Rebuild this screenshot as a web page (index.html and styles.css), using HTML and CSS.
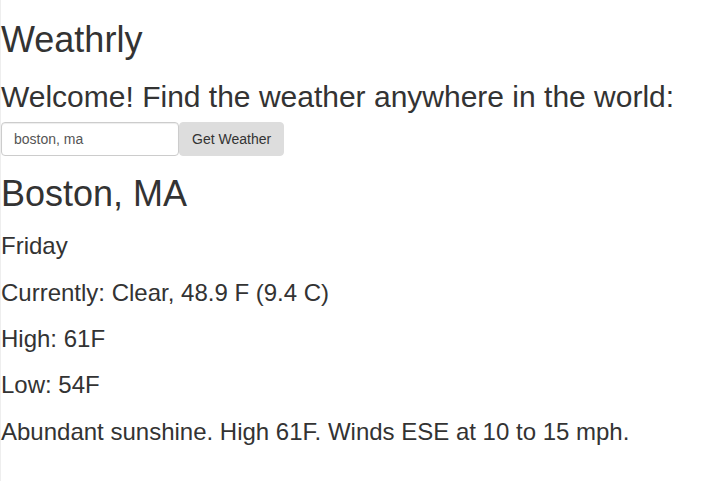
FILE: index.html
```html
<!DOCTYPE html>
<html lang="en">
<head>
<meta charset="utf-8">
<title>Weathrly</title>
<link rel="stylesheet" href="styles.css">
</head>
<body>
<div class="page">
  <h1 class="title">Weathrly</h1>
  <h2 class="welcome">Welcome! Find the weather anywhere in the world:</h2>
  <form class="search">
    <input class="search-input" type="text" value="boston, ma">
    <button class="search-btn" type="button">Get Weather</button>
  </form>
  <h1 class="city">Boston, MA</h1>
  <h3 class="line">Friday</h3>
  <h3 class="line">Currently: Clear, 48.9 F (9.4 C)</h3>
  <h3 class="line">High: 61F</h3>
  <h3 class="line">Low: 54F</h3>
  <h3 class="line">Abundant sunshine. High 61F. Winds ESE at 10 to 15 mph.</h3>
</div>
</body>
</html>
```

FILE: styles.css
```css
html, body {
  margin: 0;
  padding: 0;
  height: 100%;
  background: #fff;
}
body {
  font-family: "Liberation Sans", Arial, sans-serif;
  font-size: 14px;
  color: #333;
}
.page {
  min-height: 100%;
  box-sizing: border-box;
  border-left: 1px solid #eee;
  padding-top: 1px;
  margin-top: -1px;
}
h1, h2, h3 {
  font-weight: 500;
  line-height: 1.1;
  margin: 20px 0 10px;
}
.title {
  font-size: 36px;
}
.welcome {
  font-size: 30px;
}
.search {
  display: flex;
  margin: -1px 0 0;
}
.search-input {
  width: 178px;
  height: 34px;
  box-sizing: border-box;
  padding: 6px 12px;
  font-family: "Liberation Sans", Arial, sans-serif;
  font-size: 14px;
  color: #555;
  border: 1px solid #ccc;
  border-radius: 4px;
  box-shadow: inset 0 1px 1px rgba(0,0,0,.075);
  outline: none;
}
.search-btn {
  height: 34px;
  box-sizing: border-box;
  padding: 6px 12px;
  font-family: "Liberation Sans", Arial, sans-serif;
  font-size: 14px;
  color: #333;
  background: #ddd;
  border: 1px solid #ddd;
  border-radius: 4px;
}
.city {
  font-size: 36px;
  margin-top: 18px;
}
.line {
  font-size: 24px;
}
```
